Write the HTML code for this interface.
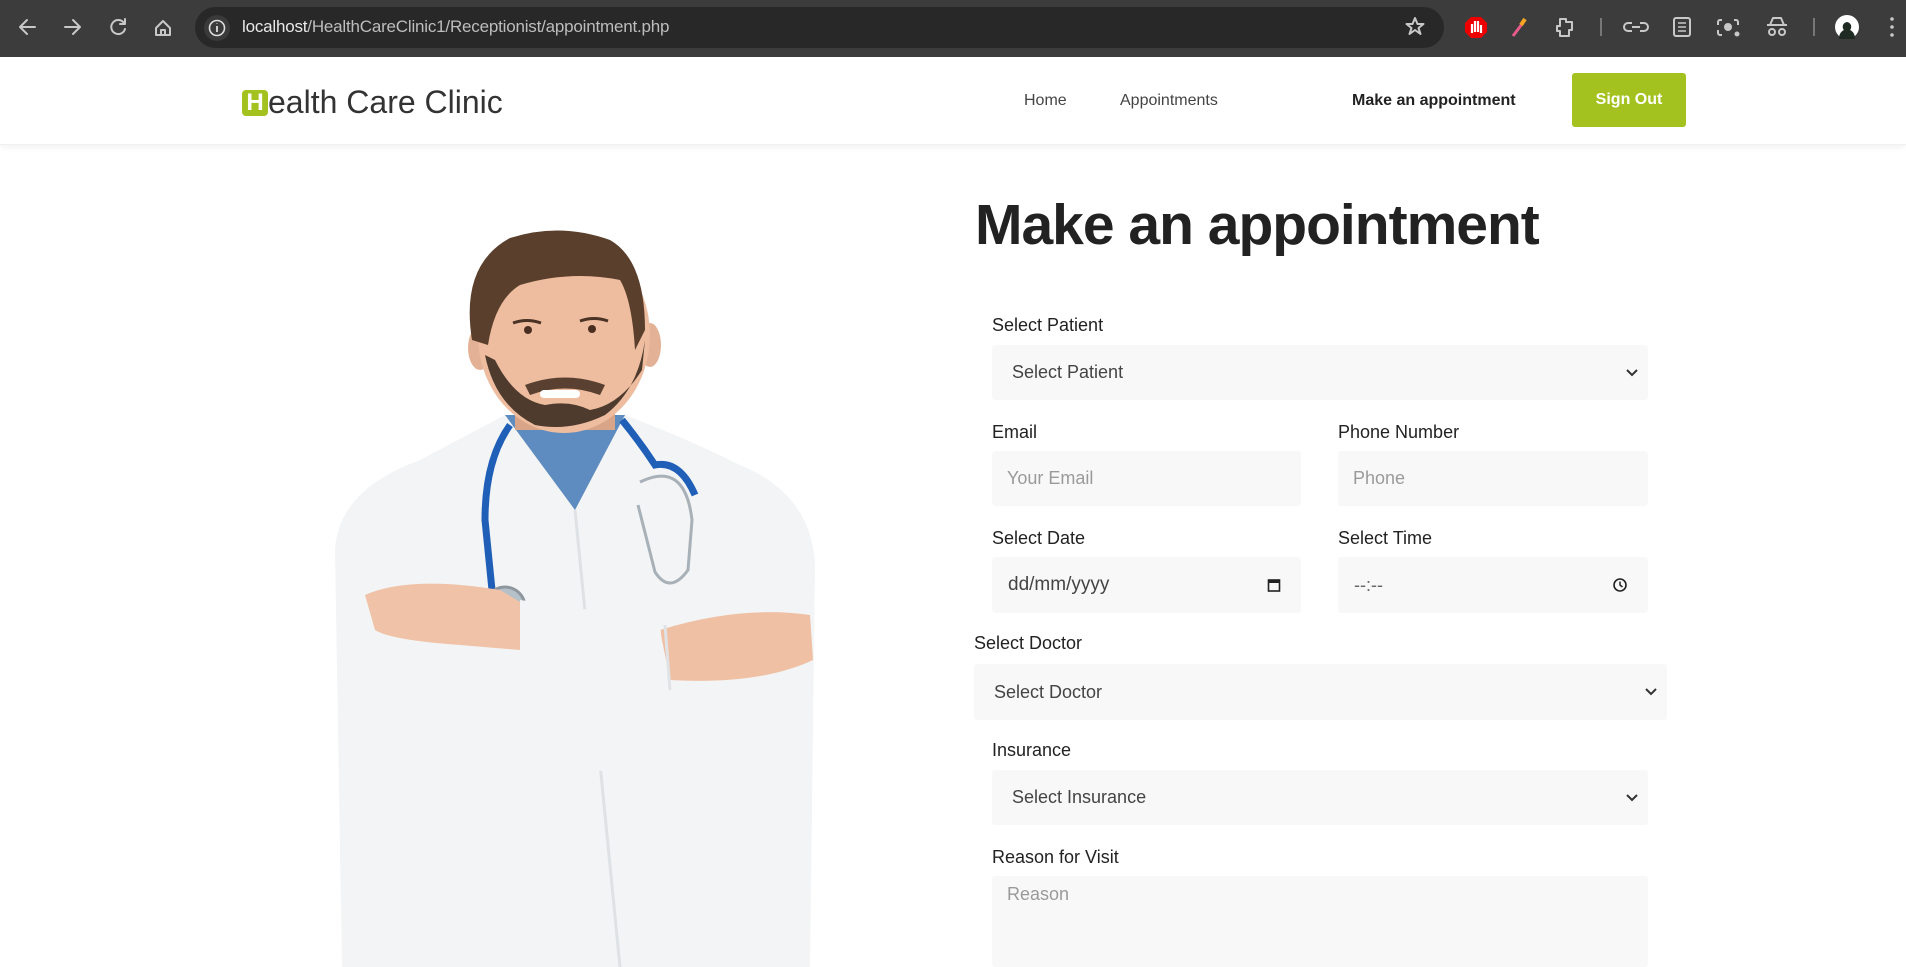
<!DOCTYPE html>
<html><head><meta charset="utf-8">
<style>
*{box-sizing:border-box;margin:0;padding:0}
body{width:1906px;height:967px;overflow:hidden;background:#fff;font-family:"Liberation Sans",sans-serif;position:relative}
.abs{position:absolute}
.chrome{left:0;top:0;width:1906px;height:57px;background:#3c3c3c}
.addr{left:195px;top:7px;width:1249px;height:41px;background:#282828;border-radius:21px}
.url{left:242px;top:17px;font-size:17px;color:#e8e8e8;letter-spacing:-0.2px}
.url span{color:#bdbdbd}
.hdr{left:0;top:57px;width:1906px;height:88px;background:#fff;box-shadow:0 2px 6px rgba(0,0,0,.06);border-bottom:1px solid #f0f0f0}
.nav{font-size:16px;color:#444;top:92px}
.lbl{font-size:18px;color:#222;position:absolute}
.fld{position:absolute;background:#f8f8f8;border-radius:3px;font-size:18px;color:#444;padding-left:20px;display:flex;align-items:center}
.ph{color:#9a9a9a;padding-left:15px}
.chev{position:absolute;right:10px;top:50%;margin-top:-5px}
</style></head><body>
<div class="abs chrome"></div>
<svg class="abs" style="left:0;top:0" width="200" height="57" fill="none" stroke="#c8c8c8" stroke-width="2" stroke-linecap="round" stroke-linejoin="round">
<path d="M35 27H20M27 20l-7 7 7 7"/>
<path d="M65 27h15M73 20l7 7-7 7"/>
<path d="M124 23a7 7 0 1 0 1 6M125 19v5h-5"/>
<path d="M156 28l7-7 7 7v7h-14z M161 35v-5h4v5"/>
</svg>
<div class="abs addr"></div>
<svg class="abs" style="left:203px;top:14px" width="28" height="28"><circle cx="14" cy="14" r="13" fill="#3a3a3a"/><circle cx="14" cy="14" r="7.5" fill="none" stroke="#ddd" stroke-width="1.6"/><path d="M14 12v6M14 9.5v.5" stroke="#ddd" stroke-width="1.8"/></svg>
<div class="abs url">localhost<span>/HealthCareClinic1/Receptionist/appointment.php</span></div>
<svg class="abs" style="left:1400px;top:0" width="506" height="57" fill="none" stroke="#c8c8c8" stroke-width="2" stroke-linejoin="round">
<path d="M15 18l2.5 6h6l-5 4 2 6-5.5-4-5.5 4 2-6-5-4h6z"/>
<polygon points="71,17 81,17 87,23 87,32 81,38 71,38 65,32 65,23" fill="#e00" stroke="none"/>
<path d="M72 33v-9M75 32v-11M78 32v-11M81 33v-8" stroke="#fff" stroke-width="2.2"/>
<path d="M113 36l9-12" stroke="#e85c8a" stroke-width="3"/><path d="M121 25l4-6" stroke="#f5a623" stroke-width="4"/>
<path d="M160 19h6v3h6v8h-3v6h-9v-5h-3v-5h3z"/>
<path d="M201 18v18" stroke="#777"/>
<path d="M232 23h-4a4 4 0 0 0 0 8h4M240 23h4a4 4 0 0 1 0 8h-4M232 27h8"/>
<rect x="274" y="18" width="16" height="18" rx="2"/><path d="M278 23h8M278 27h8M278 31h8" stroke-width="1.5"/>
<path d="M322 20h-2a2 2 0 0 0-2 2v3M334 20h2a2 2 0 0 1 2 2v3M318 30v3a2 2 0 0 0 2 2h2"/><circle cx="328" cy="27" r="3" fill="#c8c8c8"/><circle cx="337" cy="34" r="1.5" fill="#c8c8c8"/>
<path d="M367 25h20M370 25l3-7h8l3 7"/><circle cx="372" cy="32" r="3"/><circle cx="382" cy="32" r="3"/>
<path d="M414 18v18" stroke="#777"/>
<circle cx="447" cy="27" r="12" fill="#fff" stroke="none"/><path d="M439 39c0-6 3-8 5-9-2-2-2-7 3-8 5 1 5 6 3 8 2 1 5 3 5 9z" fill="#1e2a22" stroke="none"/>
<circle cx="492" cy="19" r="1.8" fill="#c8c8c8" stroke="none"/><circle cx="492" cy="27" r="1.8" fill="#c8c8c8" stroke="none"/><circle cx="492" cy="35" r="1.8" fill="#c8c8c8" stroke="none"/>
</svg>

<div class="abs hdr"></div>
<div class="abs" style="left:242px;top:90px;width:26px;height:26px;background:#a4c21f;border-radius:4px;color:#fff;font-weight:bold;font-size:24px;line-height:26px;text-align:center">H</div>
<div class="abs" style="left:268px;top:84px;font-size:32px;color:#333">ealth Care Clinic</div>
<div class="abs nav" style="left:1024px">Home</div>
<div class="abs nav" style="left:1120px">Appointments</div>
<div class="abs nav" style="left:1352px;color:#222;font-weight:bold">Make an appointment</div>
<div class="abs" style="left:1572px;top:73px;width:114px;height:54px;background:#a4c21f;border-radius:3px;color:#fff;font-weight:bold;font-size:16px;display:flex;align-items:center;justify-content:center">Sign Out</div>

<svg class="abs" style="left:320px;top:220px" width="500" height="747">
<path d="M22 747 L15 330 Q18 270 100 240 L185 195 L305 195 Q370 220 420 245 Q492 275 495 345 L490 747 Z" fill="#f3f4f5"/>
<path d="M185 195 L305 195 L255 290 Z" fill="#5f8cc0"/>
<path d="M255 290 L300 747" stroke="#dfe2e5" stroke-width="3" fill="none"/>
<rect x="195" y="160" width="100" height="50" fill="#d9a588"/>
<ellipse cx="160" cy="128" rx="12" ry="22" fill="#e3b296"/>
<ellipse cx="330" cy="125" rx="11" ry="22" fill="#e3b296"/>
<ellipse cx="244" cy="115" rx="86" ry="98" fill="#eebd9f"/>
<path d="M165 135 Q175 185 215 205 Q250 212 285 195 Q318 170 325 120 L322 150 Q300 185 270 190 Q250 180 225 185 Q195 180 175 140 Z" fill="#4e3b2e"/>
<path d="M205 165 Q245 150 285 165 L280 175 Q245 162 210 175 Z" fill="#5a4030"/>
<rect x="220" y="170" width="40" height="8" rx="4" fill="#fff"/>
<path d="M152 120 Q140 45 190 18 Q240 2 290 20 Q325 40 325 110 L315 130 Q312 80 300 60 Q250 50 200 65 Q175 80 168 125 Z" fill="#5a3f2c"/>
<path d="M193 103 q14 -5 28 0 M260 101 q14 -5 28 0" stroke="#4a3225" stroke-width="3" fill="none"/>
<circle cx="208" cy="110" r="4" fill="#4a2e20"/><circle cx="272" cy="109" r="4" fill="#4a2e20"/>
<path d="M190 205 Q165 240 165 300 L172 370 L180 380" fill="none" stroke="#1f5fb8" stroke-width="7"/>
<path d="M302 200 Q320 222 335 245 Q360 240 375 275" fill="none" stroke="#1f5fb8" stroke-width="7"/>
<path d="M320 262 Q365 240 372 300 L368 350 Q350 375 335 352 L318 285" fill="none" stroke="#a8b0b8" stroke-width="3"/>
<circle cx="185" cy="387" r="20" fill="#b6c0c9" stroke="#8f979e" stroke-width="3"/>
<path d="M45 375 Q90 355 180 370 L205 385 L200 430 L140 425 Q70 420 55 410 Z" fill="#f0c3a8"/>
<path d="M340 410 Q420 385 490 395 L493 440 Q440 465 350 460 Z" fill="#efc0a4"/>
<path d="M200 380 L340 400 L345 470 L200 440 Z" fill="#f3f4f5"/>
<path d="M60 420 L200 435 L345 470 L490 460 L488 560 L40 540 Z" fill="#f3f4f5"/>
<path d="M345 405 L350 470" stroke="#e0e3e6" stroke-width="3"/>
</svg>

<div class="abs" style="left:975px;top:192px;font-size:57px;font-weight:bold;color:#222;letter-spacing:-1px">Make an appointment</div>

<div class="lbl" style="left:992px;top:315px">Select Patient</div>
<div class="fld" style="left:992px;top:345px;width:656px;height:55px">Select Patient<svg class="chev" width="12" height="10"><path d="M1 2l5 5 5-5" stroke="#333" stroke-width="2" fill="none"/></svg></div>

<div class="lbl" style="left:992px;top:422px">Email</div>
<div class="lbl" style="left:1338px;top:422px">Phone Number</div>
<div class="fld ph" style="left:992px;top:451px;width:309px;height:55px">Your Email</div>
<div class="fld ph" style="left:1338px;top:451px;width:310px;height:55px">Phone</div>

<div class="lbl" style="left:992px;top:528px">Select Date</div>
<div class="lbl" style="left:1338px;top:528px">Select Time</div>
<div class="fld" style="left:992px;top:557px;width:309px;height:56px;padding-left:16px;color:#444;font-size:19px">dd/mm/yyyy<svg class="chev" style="right:20px;margin-top:-8px" width="14" height="16"><rect x="1.5" y="3" width="11" height="11" fill="none" stroke="#222" stroke-width="1.6"/><rect x="1.5" y="3" width="11" height="3" fill="#222"/></svg></div>
<div class="fld" style="left:1338px;top:557px;width:310px;height:56px;padding-left:16px;color:#666">--:--<svg class="chev" style="right:20px;margin-top:-8px" width="16" height="16"><circle cx="8" cy="8" r="6" fill="none" stroke="#222" stroke-width="1.6"/><path d="M8 4.5v3.5l2.5 2" stroke="#222" stroke-width="1.5" fill="none"/></svg></div>

<div class="lbl" style="left:974px;top:633px">Select Doctor</div>
<div class="fld" style="left:974px;top:664px;width:693px;height:56px">Select Doctor<svg class="chev" width="12" height="10"><path d="M1 2l5 5 5-5" stroke="#333" stroke-width="2" fill="none"/></svg></div>

<div class="lbl" style="left:992px;top:740px">Insurance</div>
<div class="fld" style="left:992px;top:770px;width:656px;height:55px">Select Insurance<svg class="chev" width="12" height="10"><path d="M1 2l5 5 5-5" stroke="#333" stroke-width="2" fill="none"/></svg></div>

<div class="lbl" style="left:992px;top:847px">Reason for Visit</div>
<div class="fld ph" style="left:992px;top:876px;width:656px;height:91px;align-items:flex-start;padding-top:8px">Reason</div>
</body></html>
